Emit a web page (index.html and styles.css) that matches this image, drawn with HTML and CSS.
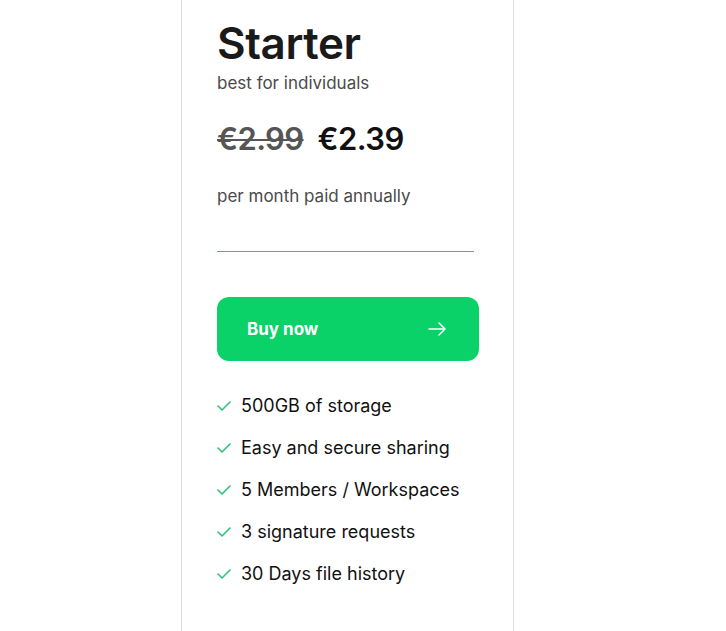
FILE: index.html
```html
<!DOCTYPE html>
<html lang="en">
<head>
<meta charset="utf-8">
<title>Starter plan</title>
<link rel="stylesheet" href="styles.css">
</head>
<body>
<div class="page">
  <section class="card">
    <h1 class="title">Starter</h1>
    <p class="subtitle">best for individuals</p>
    <div class="prices">
      <span class="old">€2.99</span>
      <span class="new">€2.39</span>
    </div>
    <p class="period">per month paid annually</p>
    <div class="divider"></div>
    <a class="buy" href="#">
      <span>Buy now</span>
      <svg width="18" height="14" viewBox="0 0 18 14" fill="none" stroke="#fff" stroke-width="1.5" stroke-linecap="round" stroke-linejoin="round"><path d="M1 7h16M11 1l6 6-6 6"/></svg>
    </a>
    <ul class="features">
      <li><svg class="check" width="14" height="10" viewBox="0 0 14 10" fill="none" stroke="#2fc177" stroke-width="1.6" stroke-linecap="round" stroke-linejoin="round"><path d="M1 5l4 4 8-8"/></svg>500GB of storage</li>
      <li><svg class="check" width="14" height="10" viewBox="0 0 14 10" fill="none" stroke="#2fc177" stroke-width="1.6" stroke-linecap="round" stroke-linejoin="round"><path d="M1 5l4 4 8-8"/></svg>Easy and secure sharing</li>
      <li><svg class="check" width="14" height="10" viewBox="0 0 14 10" fill="none" stroke="#2fc177" stroke-width="1.6" stroke-linecap="round" stroke-linejoin="round"><path d="M1 5l4 4 8-8"/></svg>5 Members / Workspaces</li>
      <li><svg class="check" width="14" height="10" viewBox="0 0 14 10" fill="none" stroke="#2fc177" stroke-width="1.6" stroke-linecap="round" stroke-linejoin="round"><path d="M1 5l4 4 8-8"/></svg>3 signature requests</li>
      <li><svg class="check" width="14" height="10" viewBox="0 0 14 10" fill="none" stroke="#2fc177" stroke-width="1.6" stroke-linecap="round" stroke-linejoin="round"><path d="M1 5l4 4 8-8"/></svg>30 Days file history</li>
    </ul>
  </section>
</div>
</body>
</html>
```

FILE: styles.css
```css
* { box-sizing: border-box; }
html, body { margin: 0; padding: 0; background: #fff; }
body {
  font-family: Inter, "Liberation Sans", Arial, sans-serif;
  color: #161616;
  height: 631px;
  overflow: hidden;
}
.page {
  padding-left: 181px;
}
.card {
  width: 333px;
  height: 631px;
  border-left: 1px solid #dedede;
  border-right: 1px solid #dedede;
  padding: 18px 35px 0 35px;
}
.title {
  margin: 0;
  font-size: 44px;
  font-weight: 600;
  line-height: 50px;
  letter-spacing: -0.4px;
  color: #1a1a1a;
}
.subtitle {
  margin: 5px 0 0;
  font-size: 17px;
  line-height: 20px;
  color: #4a4a4a;
}
.prices {
  margin-top: 26px;
  display: flex;
  gap: 14px;
  font-size: 31px;
  line-height: 40px;
  font-weight: 600;
  letter-spacing: -0.6px;
}
.old {
  color: #555;
  text-decoration: line-through;
  text-decoration-thickness: 2px;
}
.new { color: #111; }
.period {
  margin: 27px 0 0;
  font-size: 17px;
  line-height: 20px;
  color: #4a4a4a;
}
.divider {
  margin-top: 45px;
  width: 257px;
  height: 1px;
  background: #1fc98a;
}
.buy {
  margin-top: 45px;
  width: 262px;
  height: 64px;
  border-radius: 12px;
  background: #0ad168;
  display: flex;
  align-items: center;
  justify-content: space-between;
  padding: 0 33px 0 30px;
  color: #fff;
  text-decoration: none;
  font-size: 17px;
  font-weight: 700;
}
.features {
  list-style: none;
  margin: 34px 0 0;
  padding: 0;
  display: flex;
  flex-direction: column;
  gap: 20px;
}
.features li {
  display: flex;
  align-items: center;
  gap: 10px;
  font-size: 18px;
  line-height: 22px;
  color: #111;
}
.check { flex: none; }
```
